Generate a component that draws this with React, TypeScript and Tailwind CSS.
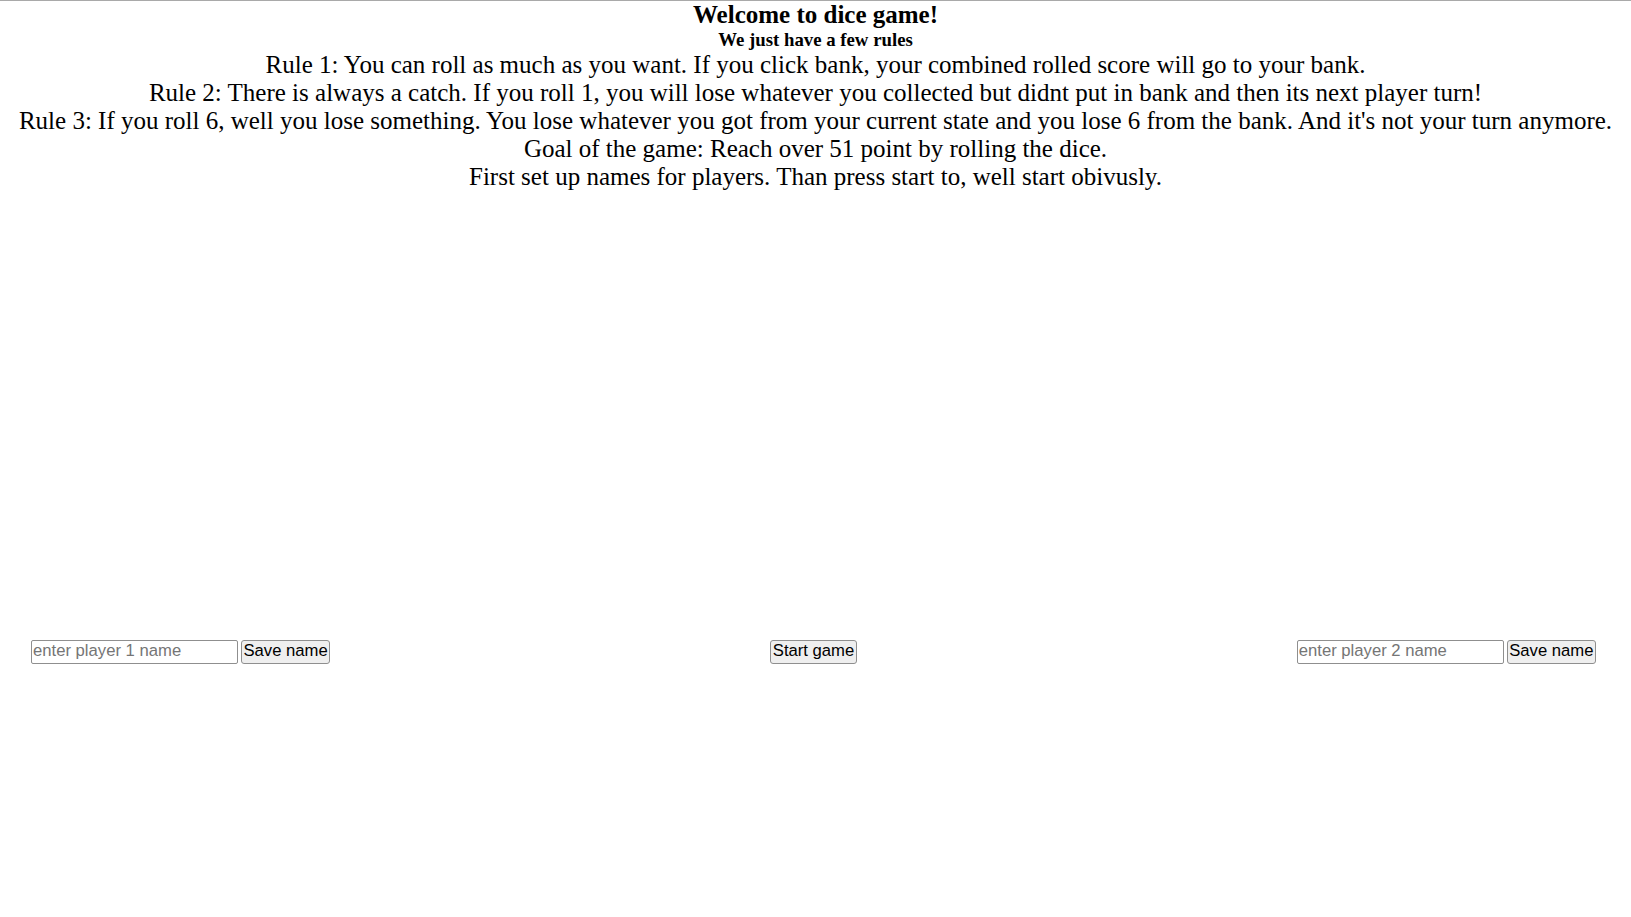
import React from "react";

export default function App() {
  const rules = [
    "Rule 1: You can roll as much as you want. If you click bank, your combined rolled score will go to your bank.",
    "Rule 2: There is always a catch. If you roll 1, you will lose whatever you collected but didnt put in bank and then its next player turn!",
    "Rule 3: If you roll 6, well you lose something. You lose whatever you got from your current state and you lose 6 from the bank. And it's not your turn anymore.",
    "Goal of the game: Reach over 51 point by rolling the dice.",
    "First set up names for players. Than press start to, well start obivusly.",
  ];
  return (
    <div className="min-h-[917px] w-full bg-white border-t border-[#a9a9a9] text-black font-['Liberation_Serif',serif]">
      <div className="text-center">
        <h2 className="mt-[3px] text-[25px] font-bold leading-[22px]">Welcome to dice game!</h2>
        <h3 className="mt-[3px] text-[18.8px] font-bold leading-[21.5px]">We just have a few rules</h3>
        <div className="text-[25px] leading-[28px]">
          {rules.map((r) => (
            <p key={r}>{r}</p>
          ))}
        </div>
      </div>
      <div className="mt-[449px] flex items-center justify-between pl-[31px] pr-[35px] font-['Liberation_Sans',Arial,sans-serif] text-[16.67px]">
        <div className="flex items-center gap-[3px]">
          <input
            type="text"
            placeholder="enter player 1 name"
            className="h-[24px] w-[207px] rounded-[2px] border border-[#8f8f8f] px-[1px] text-[16.67px] placeholder:text-[#757575] outline-none"
          />
          <button className="h-[24px] rounded-[3px] border border-[#8f8f8f] bg-[#efefef] px-[1.5px] leading-none">
            Save name
          </button>
        </div>
        <button className="h-[24px] rounded-[3px] border border-[#8f8f8f] bg-[#efefef] px-[1.5px] leading-none">
          Start game
        </button>
        <div className="flex items-center gap-[3px]">
          <input
            type="text"
            placeholder="enter player 2 name"
            className="h-[24px] w-[207px] rounded-[2px] border border-[#8f8f8f] px-[1px] text-[16.67px] placeholder:text-[#757575] outline-none"
          />
          <button className="h-[24px] rounded-[3px] border border-[#8f8f8f] bg-[#efefef] px-[1.5px] leading-none">
            Save name
          </button>
        </div>
      </div>
    </div>
  );
}
